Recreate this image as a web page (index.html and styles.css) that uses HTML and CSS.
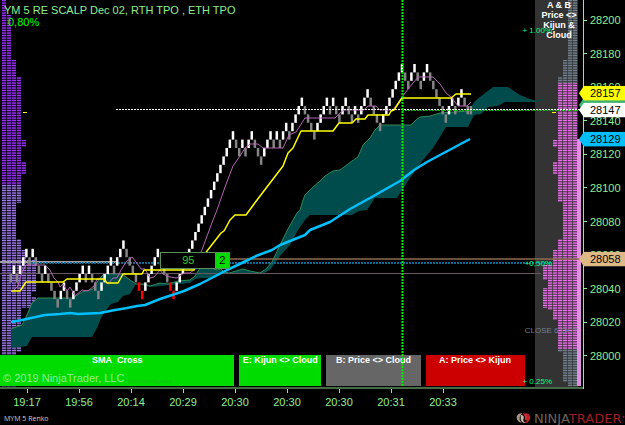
FILE: index.html
```html
<!DOCTYPE html>
<html lang="en">
<head>
  <meta charset="UTF-8">
  <title>YM 5 RE SCALP</title>
  <link rel="stylesheet" href="styles.css">
</head>
<body>
  <main class="chart">
    <section class="plot">
      <svg class="drawing" viewBox="0 0 583 387" preserveAspectRatio="none">
        <rect class="panel" x="535" y="0" width="43" height="387"/>
        <g id="leftProfile"></g>

        <!-- cloud -->
        <path class="cloud" d="M11 329 L22 325 27 315 32 303 38 298 73 298 82 292 93 289 99 279 104 274 122 274 130 280 136 284 130 294 123 296 118 302 111 304 107 309 101 318 97 328 92 337 32 337 27 346 11 348Z"/>
        <path class="cloud" d="M136 284 L145 284 150 286 160 283 168 284 178 281 190 280 195 276 200 268 210 267 217 270 221 269 224 272 229 273 236 271 243 269 250 271 260 273 266 269 272 262 278 249 288 229 297 213 300 210 303 200 305 195 312 188 320 181 325 176 333 171 340 170 352 161 358 157 363 145 370 138 375 130 380 125 411 125 416 120 420 117 430 116 440 113 468 111 475 101 485 93 493 87 508 87 520 95 530 99 537 101 540 99 544 99 543 100 537 102 505 102 498 106 488 107 481 114 474 115 468 127 446 127 440 137 433 148 423 160 410 178 397 198 375 198 367 210 359 211 352 215 310 215 305 220 298 230 290 245 280 256 270 270 262 274 222 274 215 278 200 278 195 279 190 283 160 286 150 287Z"/>
        <polyline class="cloud-edge" points="11,329 22,325 27,315 32,303 38,298 73,298 82,292 93,289 99,279 104,274 122,274 130,280 136,284 145,284 150,286 160,283 168,284 178,281 190,280 195,276 200,268 210,267 217,270 221,269 224,272 229,273 236,271 243,269 250,271 260,273 266,269 272,262 278,249 288,229 297,213 300,210 303,200 305,195 312,188 320,181 325,176 333,171 340,170 352,161 358,157 363,145 370,138 375,130 380,125 411,125 416,120 420,117 430,116 440,113 468,111"/>

        <g id="rightProfile"></g>
        <rect class="band" x="577" y="139" width="4" height="247"/>

        <!-- price levels -->
        <path class="level gray" d="M0 262H116"/>
        <path class="level tan" d="M229 259H581"/>
        <path class="level blue" d="M28 263H552"/>
        <path class="level thistle" d="M0 273.5H541"/>
        <path class="level yellow" d="M23 112.5H27M552 112.5H556"/>

        <!-- averages -->
        <g id="bricks"></g>
        <polyline class="line orchid" points="13,291 18,286 22,272 26,265 45,265 50,270 54,278 58,282 60,287 63,284 67,291 70,287 75,296 82,290 88,291 94,286 97,279 103,279 108,284 113,278 117,278 121,270 126,262 132,257 136,262 141,269 145,269 150,278 154,277 160,270 163,274 170,277 177,278 184,273 190,273 195,269 200,255 213,220 217,210 225,187 233,166 240,156 245,148 250,144 258,144 263,148 283,148 289,135 296,132 305,118 335,118 340,113 344,110 364,110 368,106 376,106 380,110 393,110 402,97 408,89 418,77 433,77 440,84 446,93 451,97 458,106 467,106 471,102"/>
        <polyline class="line yellow" points="11,291 20,291 26,282 63,282 67,279 104,279 107,283 118,283 123,274 142,274 144,270 194,270 200,261 207,251 221,233 224,231 230,220 235,215 246,215 257,200 283,166 288,153 293,148 301,131 333,131 339,123 352,123 356,119 365,119 368,115 389,115 391,111 394,110 402,98 451,98 456,94 471,94"/>
        <polyline class="line sma" points="11,322 22,320 45,315 60,314 70,313 78,314 100,313 115,310 127,308 137,306 145,305 160,299 172,295 184,291 200,284 227,270 246,261 256,256 272,250 280,245 305,235 310,230 330,222 350,209 370,198 400,181 414,170 427,162 440,155 455,147 470,139"/>

        <path class="dash white" d="M116 109.5H583"/>
        <path class="dash green" d="M402 110.5H583"/>
      </svg>

      <div class="signals">
        <div class="signal on">SMA&nbsp; Cross</div>
        <div class="signal on">E: Kijun &lt;&gt; Cloud</div>
        <div class="signal neutral">B: Price &lt;&gt; Cloud</div>
        <div class="signal off">A: Price &lt;&gt; Kijun</div>
      </div>

      <h1 class="title">YM 5 RE SCALP Dec 02, RTH TPO , ETH TPO</h1>
      <p class="change">0,80%</p>
      <p class="panel-title">A &amp; B Price &lt;&gt; Kijun &amp; Cloud</p>
      <span class="percent p100">+ 1.00%</span>
      <span class="percent p050">+0,50%</span>
      <span class="percent p025">+ 0.25%</span>
      <span class="close-note">CLOSE 6 OCT</span>
      <div class="order"><span class="order-value">95</span><span class="order-size">2</span></div>
      <p class="copyright">© 2019 NinjaTrader, LLC</p>
      <span class="watermark">www.fmrelg.com</span>

      <svg class="drawing" viewBox="0 0 583 387" preserveAspectRatio="none">
        <path class="dash session" d="M402.5 0V386"/>
      </svg>
    </section>

    <aside class="prices">
      <span>28200</span>
      <span>28180</span>
      <span>28160</span>
      <span>28140</span>
      <span>28120</span>
      <span>28100</span>
      <span>28080</span>
      <span>28060</span>
      <span>28040</span>
      <span>28020</span>
      <span>28000</span>
      <b class="tag lime" style="top: 27%"></b>
      <b class="tag yellow" style="top: 24%">28157</b>
      <b class="tag white" style="top: 28.3%">28147</b>
      <b class="tag blue" style="top: 35.8%">28129</b>
      <b class="tag tan" style="top: 66.6%">28058</b>
    </aside>

    <div class="times">
      <span>19:17</span>
      <span>19:56</span>
      <span>20:14</span>
      <span>20:29</span>
      <span>20:30</span>
      <span>20:30</span>
      <span>20:30</span>
      <span>20:31</span>
      <span>20:33</span>
    </div>
  </main>

  <footer class="footer">
    <span class="instrument">MYM 5 Renko</span>
    <div class="brand">
      <svg class="logo" viewBox="0 0 16 12">
        <path d="M7 1C2 0 0 4 1 7C2 10 5 11 6 11C3 8 3 4 7 1Z" fill="#a89684"/>
        <path d="M5 3C8 2 9 5 8 7C7 9 9 11 11 11C8 12 5 10 5 7Z" fill="#c8b8a8"/>
        <path d="M9 1C14 0 16 4 15 7C14 10 11 12 9 11C13 9 13 4 9 1Z" fill="#c4202a"/>
        <path d="M7 1C10 1 12 3 12 6C12 8 10 9 9 8C11 6 9 3 7 1Z" fill="#dd3038"/>
      </svg>
      <span class="brand-name">NINJA<em>TRADER</em><i>•</i></span>
    </div>
  </footer>

  <script src="chart.js"></script>
</body>
</html>
```
FILE: styles.css
```css
* {
  box-sizing: border-box;
}

body {
  font-family: "Liberation Sans", Arial, sans-serif;
  background: #000;
  color: #90ee90;
  margin: 0;
  min-height: 100vh;
  display: flex;
  flex-direction: column;
  font-size: 11px;
}

h1, p {
  margin: 0;
}

.chart {
  flex: 1;
  display: grid;
  grid-template-columns: 1fr 42px;
  grid-template-rows: 1fr 22px;
}

.plot {
  position: relative;
  overflow: hidden;
  border-bottom: 2px solid #476b47;
}

.drawing {
  position: absolute;
  top: 0;
  left: 0;
  width: 100%;
  height: 100%;
}

/* drawing */
.panel { fill: #333; }
.band { fill: #e090e0; }
.cloud { fill: #004b4b; }
.cloud-edge { fill: none; stroke: #2e8b57; }
.line { fill: none; stroke-linejoin: round; }
.line.orchid { stroke: #b464b4; }
.line.yellow { stroke: #ffff00; stroke-width: 1.5; }
.line.sma { stroke: #00bfff; stroke-width: 2.5; }

.level { fill: none; stroke-width: 2; }
.level.gray { stroke: #a0a0a0; }
.level.tan { stroke: #8b6b50; stroke-width: 1.5; }
.level.blue { stroke: #126a92; stroke-dasharray: 2 1; }
.level.thistle { stroke: #695862; stroke-width: 1; }
.level.yellow { stroke: #ffff00; stroke-width: 1; }

.dash { fill: none; stroke-dasharray: 2 1; }
.dash.white { stroke: #fff; }
.dash.green { stroke: #00b400; }
.dash.session { stroke: #00ee00; stroke-width: 2; }

.up { fill: #fff; }
.down { fill: #858585; }
.alert { fill: #ff0000; }

.purple { fill: #9b30ff; }
.lavender { fill: #9f79ee; }
.pink { fill: #ee6aee; }
.slate { fill: #708090; }

/* texts over the plot */
.title {
  position: absolute;
  top: 4px;
  left: 4px;
  font-size: 11px;
  font-weight: normal;
  line-height: 12px;
}

.change {
  position: absolute;
  top: 16px;
  left: 8px;
  color: #00ff00;
  line-height: 12px;
}

.panel-title {
  position: absolute;
  top: 0;
  right: 2px;
  width: 44px;
  color: #fff;
  font-size: 9px;
  font-weight: bold;
  line-height: 10px;
  text-align: center;
}

.percent {
  position: absolute;
  right: 31px;
  color: #00ff7f;
  font-size: 8px;
  line-height: 10px;
}

.p100 { top: 6.6%; }
.p050 { top: 66.8%; }
.p025 { bottom: 0; }

.close-note {
  position: absolute;
  top: 84.2%;
  left: 90%;
  color: #708090;
  font-size: 8px;
  line-height: 10px;
}

.order {
  position: absolute;
  top: 65%;
  left: 27.5%;
  width: 70px;
  height: 17px;
  display: flex;
  border: 1px solid #5c8f5c;
  background: #000;
  line-height: 15px;
  text-align: center;
}

.order-value {
  flex: 1;
  color: #32cd32;
}

.order-size {
  width: 14px;
  background: #00dc00;
  color: #000;
}

.signals {
  position: absolute;
  bottom: 1px;
  left: 0;
  width: 90%;
  height: 31px;
  display: grid;
  grid-template-columns: 234fr 82fr 94fr 99fr;
  gap: 5px;
}

.signal {
  color: #fff;
  font-size: 9px;
  font-weight: bold;
  line-height: 11px;
  text-align: center;
  white-space: nowrap;
}

.signal.on { background: #00dc00; }
.signal.neutral { background: #666; }
.signal.off { background: #cc0000; }

.copyright {
  position: absolute;
  bottom: 3px;
  left: 3px;
  line-height: 12px;
}

.watermark {
  position: absolute;
  bottom: 1px;
  left: 128px;
  color: #19c419;
  font-size: 6px;
  line-height: 9px;
}

/* price axis */
.prices {
  position: relative;
  border-left: 1px solid #90ee90;
  padding: 14px 0 27px;
  display: flex;
  flex-direction: column;
  justify-content: space-between;
}

.prices span {
  display: flex;
  align-items: center;
  gap: 3px;
  line-height: 12px;
}

.prices span::before {
  content: "";
  width: 3px;
  height: 1px;
  background: #90ee90;
}

.tag {
  position: absolute;
  left: -5px;
  right: 0;
  height: 15px;
  transform: translateY(-50%);
  padding-left: 11px;
  color: #000;
  font-weight: normal;
  line-height: 15px;
  clip-path: polygon(0 50%, 5px 0, 100% 0, 100% 100%, 5px 100%);
}

.tag.yellow { background: #ffff00; }
.tag.white { background: #fff; }
.tag.blue { background: #00bfff; }
.tag.tan { background: #deb887; }
.tag.lime { background: #3cb371; }

/* time axis */
.times {
  display: grid;
  grid-template-columns: repeat(9, 52fr) 114fr;
  padding-left: 1px;
}

.times span {
  display: flex;
  flex-direction: column;
  align-items: center;
  gap: 3px;
  line-height: 12px;
}

.times span::before {
  content: "";
  width: 1px;
  height: 4px;
  background: #90ee90;
}

.footer {
  display: flex;
  justify-content: space-between;
  align-items: center;
  height: 14px;
  padding-left: 4px;
}

.instrument {
  color: #ccc;
  font-family: "Open Sans", sans-serif;
  font-size: 7px;
}

.brand {
  display: flex;
  align-items: center;
  gap: 3px;
}

.logo {
  width: 15px;
  height: 12px;
}

.brand-name {
  color: #6e625a;
  font-family: "DejaVu Sans", sans-serif;
  font-size: 13px;
  line-height: 14px;
}

.brand-name em {
  color: #a01c24;
  font-style: normal;
}

.brand-name i {
  color: #a01c24;
  font-size: 6px;
  font-style: normal;
  vertical-align: 4px;
}
```
FILE: chart.js
```javascript
// brick levels, 0 is the session high, one level is 5 points
const levels = [
  25, 24, 25, 24, 23, 22, 23, 22, 23, 24, 25, 24, 25, 26, 27, 28, 27, 26, 27, 28,
  27, 26, 25, 24, 25, 24, 25, 26, 27, 26, 25, 24, 23, 24, 23, 22, 21, 22, 23, 24,
  25, 26, 27, 26, 25, 24, 23, 22, 23, 24, 25, 26, 27, 26, 25, 24, 23, 22, 21, 20,
  19, 18, 17, 16, 15, 14, 13, 12, 11, 10, 9, 8, 9, 10, 9, 10, 9, 8, 9, 10,
  11, 10, 9, 8, 9, 8, 9, 8, 7, 8, 7, 6, 5, 4, 5, 6, 7, 8, 7, 6,
  5, 4, 5, 4, 5, 6, 5, 4, 5, 6, 5, 6, 5, 4, 3, 4, 5, 6, 7, 6,
  5, 4, 3, 2, 1, 0, 1, 2, 1, 0, 1, 2, 1, 0, 1, 2, 3, 4, 5, 6,
  5, 4, 5, 4, 3, 4, 5, 5
];
const alerts = [41, 42, 51, 52];

function addRect(parent, x, y, width, height, className, opacity) {
  const rect = document.createElementNS('http://www.w3.org/2000/svg', 'rect');
  rect.setAttribute('x', x);
  rect.setAttribute('y', y);
  rect.setAttribute('width', width);
  rect.setAttribute('height', height);
  rect.setAttribute('class', className);
  if (opacity) rect.setAttribute('opacity', opacity);
  parent.appendChild(rect);
}

const bricks = document.getElementById('bricks');
levels.forEach((level, i) => {
  let color = i > 0 && level < levels[i - 1] ? 'up' : 'down';
  if (alerts.includes(i)) color = 'alert';
  addRect(bricks, 9.5 + i * 3.13, 64 + level * 8.4, 2.5, 8.4, color);
});

// volume profiles: [from, to, columns, color]
const leftRows = [
  [0, 15, 1, 'purple'], [15, 60, 2, 'purple'], [60, 77, 3, 'purple'],
  [77, 140, 4, 'purple'], [140, 147, 5, 'purple'], [147, 162, 4, 'purple'],
  [162, 174, 5, 'purple'], [174, 185, 4, 'purple'], [185, 203, 4, 'lavender'],
  [203, 239, 3, 'lavender'], [239, 250, 4, 'lavender'], [250, 260, 5, 'lavender'],
  [260, 292, 7, 'lavender'], [292, 297, 6, 'lavender'], [297, 308, 7, 'lavender'],
  [308, 352, 4, 'lavender'], [352, 387, 3, 'lavender']
];
const rightRows = [
  [0, 60, 2, 'slate'], [60, 77, 3, 'slate'], [77, 83, 4, 'slate'],
  [83, 140, 4, 'pink'], [140, 147, 5, 'pink'], [147, 162, 4, 'pink'],
  [162, 174, 5, 'pink'], [174, 202, 4, 'pink'], [202, 239, 3, 'pink'],
  [239, 250, 4, 'pink'], [250, 265, 5, 'pink'], [265, 280, 7, 'pink'],
  [280, 288, 6, 'pink'], [288, 308, 7, 'pink'], [308, 310, 6, 'pink'],
  [310, 320, 5, 'pink'], [320, 349, 4, 'pink'], [349, 352, 4, 'slate'],
  [352, 382, 3, 'slate'], [382, 386, 2, 'slate']
];
const shades = [1, 0.25, 0.6, 0.7, 0.25];

function drawProfile(id, rows, start, step) {
  const group = document.getElementById(id);
  rows.forEach(([from, to, columns, color]) => {
    for (let y = from; y < to; y++) {
      for (let c = 0; c < columns; c++) {
        addRect(group, start + c * step, y, 4, 1, color, shades[y % 5]);
      }
      // faint fill between the columns
      const left = step > 0 ? start : start + (columns - 1) * step;
      addRect(group, left, y, columns * 5 - 1, 1, color, shades[y % 5] * 0.3);
    }
  });
}

drawProfile('leftProfile', leftRows, 2, 5);
drawProfile('rightProfile', rightRows, 573, -5);
```
